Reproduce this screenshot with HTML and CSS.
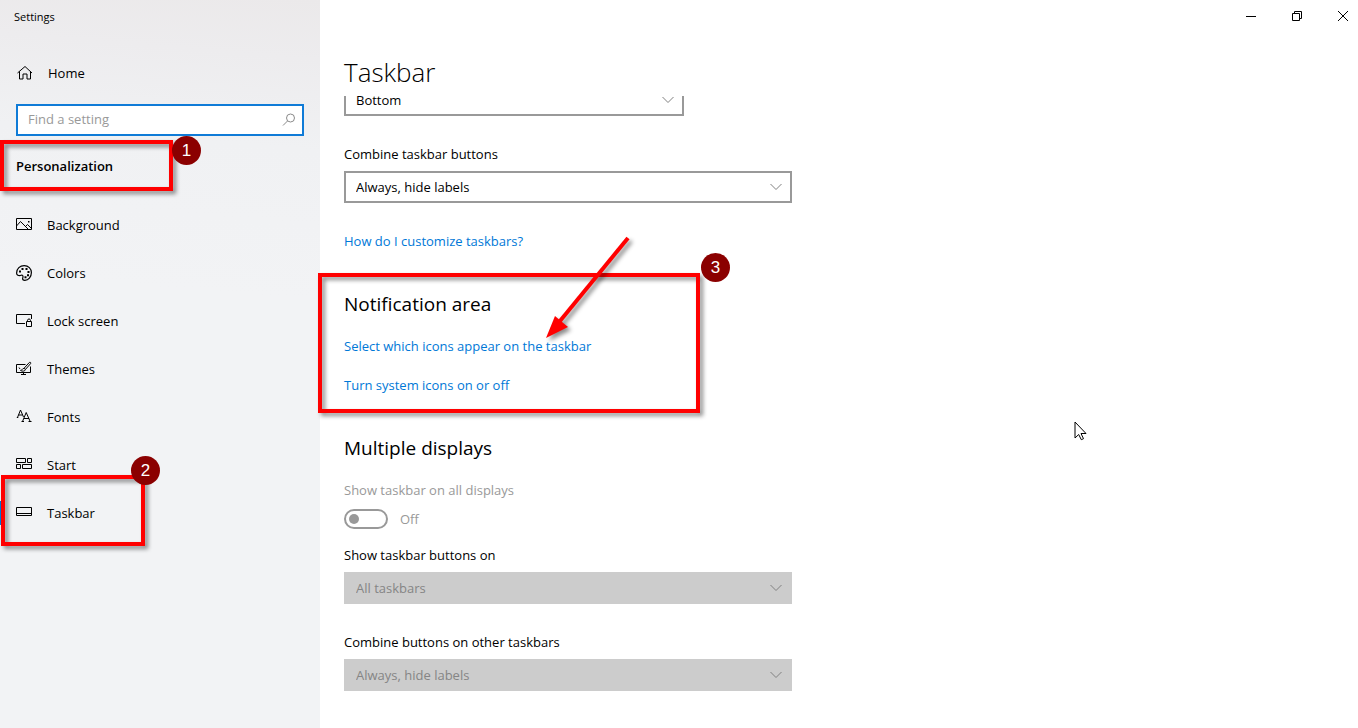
FILE: index.html
```
<!DOCTYPE html>
<html lang="en">
<head>
  <meta charset="UTF-8">
  <meta name="viewport" content="width=device-width, initial-scale=1.0">
  <title>Settings</title>
  <link rel="stylesheet" href="styles.css">
</head>
<body>
  <div class="window">
    <aside class="sidebar">
      <div class="window-title">Settings</div>

      <a class="nav-link home" href="#">
        <svg class="icon" viewBox="0 0 16 16"><path d="M1.500 8 9 1.500 16 8M3.500 6.500v7.500h3.500V9h4v5h3.500V6.500"/></svg>
        Home
      </a>

      <div class="search">
        <input type="text" placeholder="Find a setting" aria-label="Find a setting">
        <svg class="search-icon" viewBox="0 0 14 14"><circle cx="8.500" cy="5" r="4"/><path d="M5.500 8 1 12.500"/></svg>
      </div>

      <h2 class="section-name">Personalization</h2>

      <nav class="nav">
        <a class="nav-link" href="#">
          <svg class="icon" viewBox="0 0 16 16"><path d="M.5 1.500h15v11H.5zM.5 9l4-4.500 8 8M9.500 9.500l2-2 4 4"/><path class="fill" d="M12 4h1.500v1.500H12z"/></svg>
          Background
        </a>
        <a class="nav-link" href="#">
          <svg class="icon palette" viewBox="0 0 16 16"><path d="M.6 8C.6 3.500 4 .6 8.200.6c4.100 0 7.200 3 7.200 7 0 4.500-3.100 7.800-6.500 7.800-1.800 0-2.600-.9-2.200-2.200.4-1.400.6-2.500-.3-3-.8-.5-1.500.4-2.600.4C1.900 10.600.6 9.800.6 8z"/><path class="fill" d="M3 5.500h2v2H3zM5.500 3h2v2h-2zM9.500 3h2v2h-2zM11.500 6h2v2h-2zM11 9.200h2v2h-2zM8.500 11.200h2v2h-2z"/></svg>
          Colors
        </a>
        <a class="nav-link" href="#">
          <svg class="icon" viewBox="0 0 16 16"><path d="M9 10.500H.5v-9h15V6M10.500 8.500h5v5h-5zM11.500 8.500V7.300c0-1.800 3-1.800 3 0v1.200"/></svg>
          Lock screen
        </a>
        <a class="nav-link" href="#">
          <svg class="icon" viewBox="0 0 16 16"><path d="M9.500 3.500h-9v8h14v-6M7.500 11.500v2M5 13.500h5M8 7.300l5.300-5.800c.8-.8 2 .2 1.300 1.100L9.500 8.400zM7.900 7.400c-1.700-.1-1.600 2-3.400 2 1.500 1.200 4.700 1 5-.9M3 6.500l1 1.500"/></svg>
          Themes
        </a>
        <a class="nav-link" href="#">
          <svg class="icon" viewBox="0 0 16 16"><path d="M1.500 8.500 4.500 1l3 7M2.500 6h4M6.500 12.500 10.200 3.500l4 9M8 9.500h5M5.500 12.500H8M12.500 12.500h3M.8 8.500h1.500"/></svg>
          Fonts
        </a>
        <a class="nav-link" href="#">
          <svg class="icon" viewBox="0 0 16 16"><path d="M.5 1.500h9v4h-9zM11.500 1.500h4v4h-4zM.5 7.500h4v4h-4zM6.500 7.500h9v4h-9z"/></svg>
          Start
        </a>
        <a class="nav-link active" href="#" aria-current="page">
          <svg class="icon" viewBox="0 0 16 16"><path d="M.5 2.500h15v8H.5zM.5 8.500h15"/></svg>
          Taskbar
        </a>
      </nav>
    </aside>

    <main class="main">
      <div class="window-controls">
        <button type="button" aria-label="Minimize"><svg viewBox="0 0 10 10"><path d="M0 5.500h10"/></svg></button>
        <button type="button" aria-label="Restore"><svg viewBox="0 0 10 10"><path d="M.5 2.500h7v7h-7zM2.500 2.500v-2h7v7h-2"/></svg></button>
        <button type="button" aria-label="Close"><svg viewBox="0 0 10 10"><path d="m0 0 10 10M10 0 0 10"/></svg></button>
      </div>

      <h1 class="page-title">Taskbar</h1>

      <div class="content">
        <div class="select location">
          <select aria-label="Taskbar location on screen"><option>Bottom</option></select>
          <svg class="chevron" viewBox="0 0 12 8"><path d="m.5 1 5.500 5.500L11.500 1"/></svg>
        </div>

        <div class="field">
          <label for="combine">Combine taskbar buttons</label>
          <div class="select">
            <select id="combine"><option>Always, hide labels</option></select>
            <svg class="chevron" viewBox="0 0 12 8"><path d="m.5 1 5.500 5.500L11.500 1"/></svg>
          </div>
        </div>

        <a class="link help" href="#">How do I customize taskbars?</a>

        <section class="group">
          <h2>Notification area</h2>
          <a class="link" href="#">Select which icons appear on the taskbar</a>
          <a class="link" href="#">Turn system icons on or off</a>
        </section>

        <section class="group">
          <h2>Multiple displays</h2>
          <label class="disabled" for="all-displays">Show taskbar on all displays</label>
          <div class="toggle-row disabled">
            <input class="toggle" type="checkbox" role="switch" id="all-displays" disabled>
            <span>Off</span>
          </div>
          <div class="field compact">
            <label for="buttons-on">Show taskbar buttons on</label>
            <div class="select">
              <select id="buttons-on" disabled><option>All taskbars</option></select>
              <svg class="chevron" viewBox="0 0 12 8"><path d="m.5 1 5.500 5.500L11.500 1"/></svg>
            </div>
          </div>
          <div class="field">
            <label for="combine-other">Combine buttons on other taskbars</label>
            <div class="select">
              <select id="combine-other" disabled><option>Always, hide labels</option></select>
              <svg class="chevron" viewBox="0 0 12 8"><path d="m.5 1 5.500 5.500L11.500 1"/></svg>
            </div>
          </div>
        </section>
      </div>
    </main>

    <!-- Step markers drawn over the window -->
    <div class="annotations">
      <div class="mark mark-1"></div>
      <div class="mark mark-2"></div>
      <div class="mark mark-3"></div>
      <svg class="arrow" viewBox="0 0 90 110"><path class="shaft" d="M84 4 16 87"/><path class="head" d="M2 104 11 82l13 11z"/></svg>
      <span class="step step-1">1</span>
      <span class="step step-2">2</span>
      <span class="step step-3">3</span>
      <svg class="cursor" viewBox="0 0 13 20"><path d="M1 1v16l3.700-3.500 2.600 5.200 2.200-1-2.500-5.200H12z"/></svg>
    </div>
  </div>
</body>
</html>
```
FILE: styles.css
```
* {
  box-sizing: border-box;
}

body {
  margin: 0;
  font-family: "Open Sans", "Noto Sans", sans-serif;
  font-size: 13px;
  line-height: 20px;
  color: #000;
  background: #fff;
}

h1, h2 {
  margin: 0;
  font-weight: 400;
}

a {
  text-decoration: none;
}

svg {
  display: block;
  fill: none;
  stroke: currentColor;
}

.window {
  position: relative;
  display: flex;
  height: 100vh;
  overflow: hidden;
}

/* Sidebar */
.sidebar {
  flex: 0 0 320px;
  background: linear-gradient(185deg, #ebe9ea 0, #edecee 60px, #f0f1f3 150px, #f2f3f5 300px, #f2f3f5 100%);
}

.window-title {
  padding: 7px 14px;
  font-size: 11px;
}

.nav-link {
  display: flex;
  align-items: center;
  gap: 15px;
  height: 48px;
  padding: 0 16px;
  color: #000;
}

.home {
  gap: 16px;
  margin-top: 15px;
}

.icon {
  width: 16px;
  height: 16px;
}

.icon .fill {
  fill: currentColor;
  stroke: none;
}

.palette {
  stroke-width: 1.2;
}

.search {
  position: relative;
  margin: 7px 16px 0;
}

.search input {
  display: block;
  width: 100%;
  height: 32px;
  padding: 0 32px 2px 10px;
  border: 2px solid #0f7bd7;
  border-radius: 0;
  outline: none;
  font: inherit;
  background: #fff;
}

.search input::placeholder {
  color: #999;
  opacity: 1;
}

.search-icon {
  position: absolute;
  top: 9px;
  right: 8px;
  width: 14px;
  height: 14px;
  color: #8a8a8a;
}

.section-name {
  margin: 20px 16px 25px;
  font-size: 13px;
  font-weight: 600;
}

.active {
  box-shadow: inset 2px 0 #0078d7;
  height: 24px;
  margin-top: 12px;
}

/* Main pane */
.main {
  flex: 1;
  display: flex;
  flex-direction: column;
  min-width: 0;
}

.window-controls {
  display: flex;
  justify-content: flex-end;
  gap: 16px;
}

.window-controls button {
  display: flex;
  align-items: center;
  justify-content: center;
  width: 30px;
  height: 32px;
  padding: 0;
  border: 0;
  background: none;
  color: #000;
}

.window-controls svg {
  width: 10px;
  height: 10px;
}

.page-title {
  padding: 22px 24px 6px;
  font-size: 26px;
  font-weight: 300;
  line-height: 36px;
}

.content {
  flex: 1;
  padding: 0 24px;
  overflow: hidden;
}

.select {
  position: relative;
  max-width: 448px;
}

.select select {
  display: block;
  width: 100%;
  height: 32px;
  padding: 0 32px 0 10px;
  border: 2px solid #999;
  border-radius: 0;
  appearance: none;
  font: inherit;
  color: #000;
  background: #fff;
}

.select select:disabled {
  border-color: #ccc;
  color: #858585;
  background: #ccc;
  opacity: 1;
}

.chevron {
  position: absolute;
  top: 12px;
  right: 10px;
  width: 12px;
  height: 8px;
  color: #808080;
  pointer-events: none;
}

/* scrolled partly under the page title */
.location {
  max-width: 340px;
  margin-top: -12px;
}

.field {
  margin-top: 28px;
}

.field.compact {
  margin-top: 16px;
}

label {
  display: block;
}

.field label {
  margin-bottom: 7px;
}

.link {
  display: block;
  width: fit-content;
  color: #0078d7;
}

.help {
  margin-top: 28px;
}

.group {
  margin-top: 39px;
}

.group h2 {
  margin-bottom: 18px;
  font-size: 19px;
  line-height: 28px;
}

.group .link + .link {
  margin-top: 19px;
}

.disabled {
  color: #999;
}

.toggle-row {
  display: flex;
  align-items: center;
  gap: 12px;
  margin-top: 9px;
}

.toggle {
  display: flex;
  align-items: center;
  width: 44px;
  height: 20px;
  margin: 0;
  padding: 0 3px;
  border: 2px solid #999;
  border-radius: 10px;
  appearance: none;
}

.toggle::before {
  content: "";
  width: 10px;
  height: 10px;
  border-radius: 50%;
  background: #999;
}

/* Annotations */
.annotations {
  position: absolute;
  inset: 0;
  pointer-events: none;
}

.mark, .step, .arrow, .cursor {
  position: absolute;
}

.mark {
  border: 4px solid #f00;
  filter: drop-shadow(3px 3px 2px rgba(0, 0, 0, 0.45));
}

.mark-1 {
  left: 0;
  top: 140px;
  width: 173px;
  height: 51px;
}

.mark-2 {
  left: 1px;
  top: 475px;
  width: 144px;
  height: 71px;
}

.mark-3 {
  left: 318px;
  top: 273px;
  width: 382px;
  height: 140px;
}

.step {
  width: 29px;
  height: 29px;
  border-radius: 50%;
  font-family: "Liberation Sans", Arial, sans-serif;
  font-size: 17px;
  line-height: 29px;
  text-align: center;
  color: #fff;
  background: #8b0000;
}

.step-1 {
  left: 172px;
  top: 136px;
}

.step-2 {
  left: 131px;
  top: 456px;
}

.step-3 {
  left: 701px;
  top: 253px;
}

.arrow {
  left: 544px;
  top: 234px;
  width: 90px;
  height: 110px;
  overflow: visible;
  filter: drop-shadow(3px 3px 2px rgba(0, 0, 0, 0.45));
}

.shaft {
  stroke: #f00;
  stroke-width: 4;
}

.head {
  fill: #f00;
  stroke: none;
}

.cursor {
  left: 1074px;
  top: 421px;
  width: 13px;
  height: 20px;
  fill: #fff;
}
```
